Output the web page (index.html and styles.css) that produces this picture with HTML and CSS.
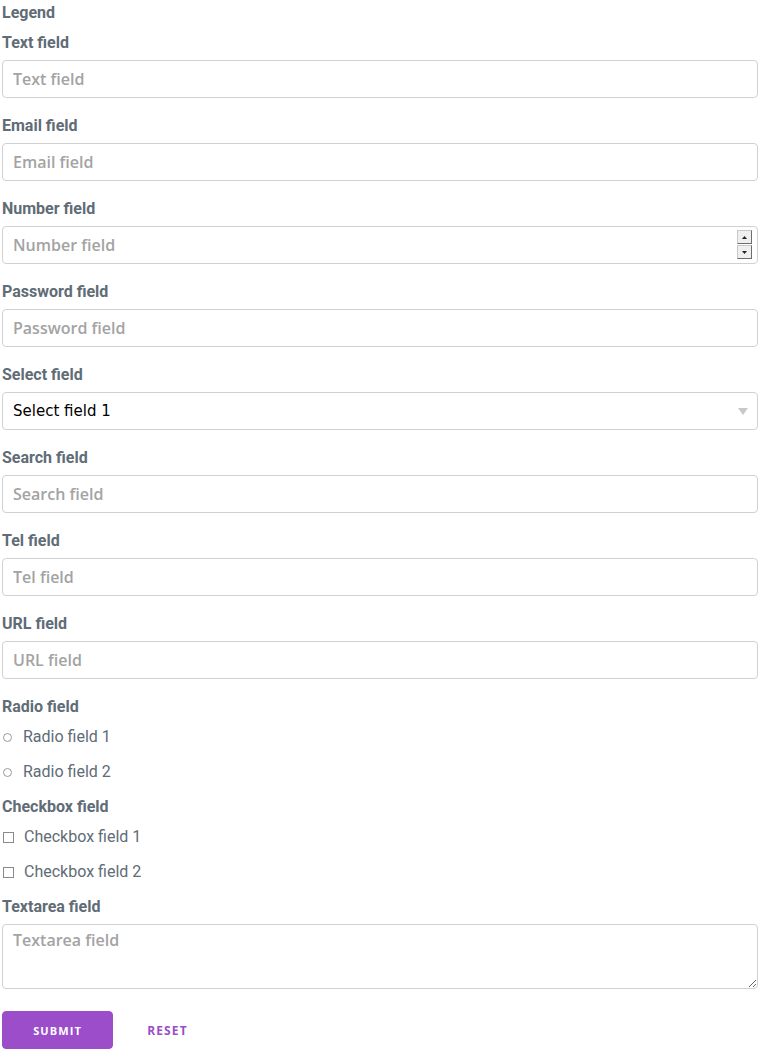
FILE: index.html
```html
<!DOCTYPE html>
<html>
<head>
<meta charset="utf-8">
<link rel="stylesheet" href="styles.css">
</head>
<body>
<form class="form">
  <div class="legend">Legend</div>

  <div class="group">
    <label class="label">Text field</label>
    <input class="field" type="text" placeholder="Text field">
  </div>
  <div class="group">
    <label class="label">Email field</label>
    <input class="field" type="email" placeholder="Email field">
  </div>
  <div class="group">
    <label class="label">Number field</label>
    <div class="field-wrap">
      <input class="field" type="text" placeholder="Number field">
      <div class="spinner">
        <span class="spin-btn"><svg width="5" height="3" viewBox="0 0 5 3"><path d="M2.5 0L5 3H0z" fill="#222"/></svg></span>
        <span class="spin-btn"><svg width="5" height="3" viewBox="0 0 5 3"><path d="M0 0h5L2.5 3z" fill="#222"/></svg></span>
      </div>
    </div>
  </div>
  <div class="group">
    <label class="label">Password field</label>
    <input class="field" type="text" placeholder="Password field">
  </div>
  <div class="group">
    <label class="label">Select field</label>
    <div class="field-wrap">
      <select class="field select"><option>Select field 1</option><option>Select field 2</option></select>
      <svg class="caret" width="10" height="7" viewBox="0 0 10 7"><path d="M0 0h10L5 7z" fill="#c8c8c8"/></svg>
    </div>
  </div>
  <div class="group">
    <label class="label">Search field</label>
    <input class="field" type="text" placeholder="Search field">
  </div>
  <div class="group">
    <label class="label">Tel field</label>
    <input class="field" type="text" placeholder="Tel field">
  </div>
  <div class="group">
    <label class="label">URL field</label>
    <input class="field" type="text" placeholder="URL field">
  </div>

  <div class="group choice-group">
    <label class="label">Radio field</label>
    <label class="option"><span class="radio"></span><span>Radio field 1</span></label>
    <label class="option"><span class="radio"></span><span>Radio field 2</span></label>
  </div>
  <div class="group choice-group">
    <label class="label">Checkbox field</label>
    <label class="option"><span class="check"></span><span>Checkbox field 1</span></label>
    <label class="option"><span class="check"></span><span>Checkbox field 2</span></label>
  </div>

  <div class="group textarea-group">
    <label class="label">Textarea field</label>
    <textarea class="field textarea" placeholder="Textarea field"></textarea>
  </div>

  <div class="actions">
    <button type="button" class="btn btn-primary">Submit</button>
    <button type="button" class="btn btn-clear">Reset</button>
  </div>
</form>
</body>
</html>
```
FILE: styles.css
```css
* { box-sizing: border-box; }
html, body { margin: 0; padding: 0; background: #fff; }
body { font-family: Roboto, "Liberation Sans", sans-serif; color: #606c76; }

.form { padding: 2px 2px 0 2px; display: flex; flex-direction: column; }

.legend {
  font-weight: 700; font-size: 16px; line-height: 20px;
  padding-top: 1px; margin-bottom: 9px;
}

.group { display: flex; flex-direction: column; margin-bottom: 17px; }

.label {
  font-weight: 700; font-size: 16px; line-height: 20px;
  padding-top: 1px; margin-bottom: 7px; display: block;
}

.field {
  display: block; width: 100%; height: 38px;
  border: 1px solid #d1d1d1; border-radius: 4px;
  padding: 0 10px; margin: 0;
  font-family: "Open Sans", "DejaVu Sans", sans-serif;
  font-size: 16px; font-weight: 600; color: #000; background: #fff;
  outline: none;
}
.field::placeholder { color: #a3a3a3; }

.field-wrap { position: relative; }

.spinner {
  position: absolute; right: 6px; top: 4px;
  display: flex; flex-direction: column; gap: 1px;
}
.spin-btn {
  width: 15px; height: 14px;
  background: #efefef;
  border: 1px solid #c9c9c9;
  border-right-color: #6d6d6d; border-bottom-color: #6d6d6d;
  display: flex; align-items: center; justify-content: center;
}

.select {
  appearance: none; -webkit-appearance: none; color: #000;
  font-family: "DejaVu Sans", sans-serif; font-size: 15px; font-weight: 400;
}
.caret { position: absolute; right: 10px; top: 16px; pointer-events: none; }

.choice-group .label { margin-bottom: 2px; }
.choice-group { margin-bottom: 7px; }
.option {
  display: flex; align-items: center; height: 35px;
  font-size: 16px; color: #606c76;
}
.radio {
  width: 9px; height: 9px; border: 1px solid #9a9a9a; border-radius: 50%;
  margin: 1px 11px 0 1px; flex: none; background: #fff;
}
.check {
  width: 11px; height: 11px; border: 1px solid #8a8a8a;
  margin: 1px 10px 0 1px; flex: none; background: #fff;
}

.textarea { height: 65px; padding: 4px 10px; resize: both; }
.textarea-group { margin-bottom: 22px; }

.actions { display: flex; align-items: center; }
.btn {
  height: 38px; border-radius: 4px; border: 1px solid transparent;
  font-family: "Open Sans", "DejaVu Sans", sans-serif;
  font-size: 11px; font-weight: 700; letter-spacing: 1.1px;
  text-transform: uppercase; cursor: pointer; padding: 0;
}
.btn-primary { background: #9b4dca; border-color: #9b4dca; color: #fff; width: 111px; }
.btn-clear { background: transparent; color: #9b4dca; width: 109px; font-size: 12px; }
```
